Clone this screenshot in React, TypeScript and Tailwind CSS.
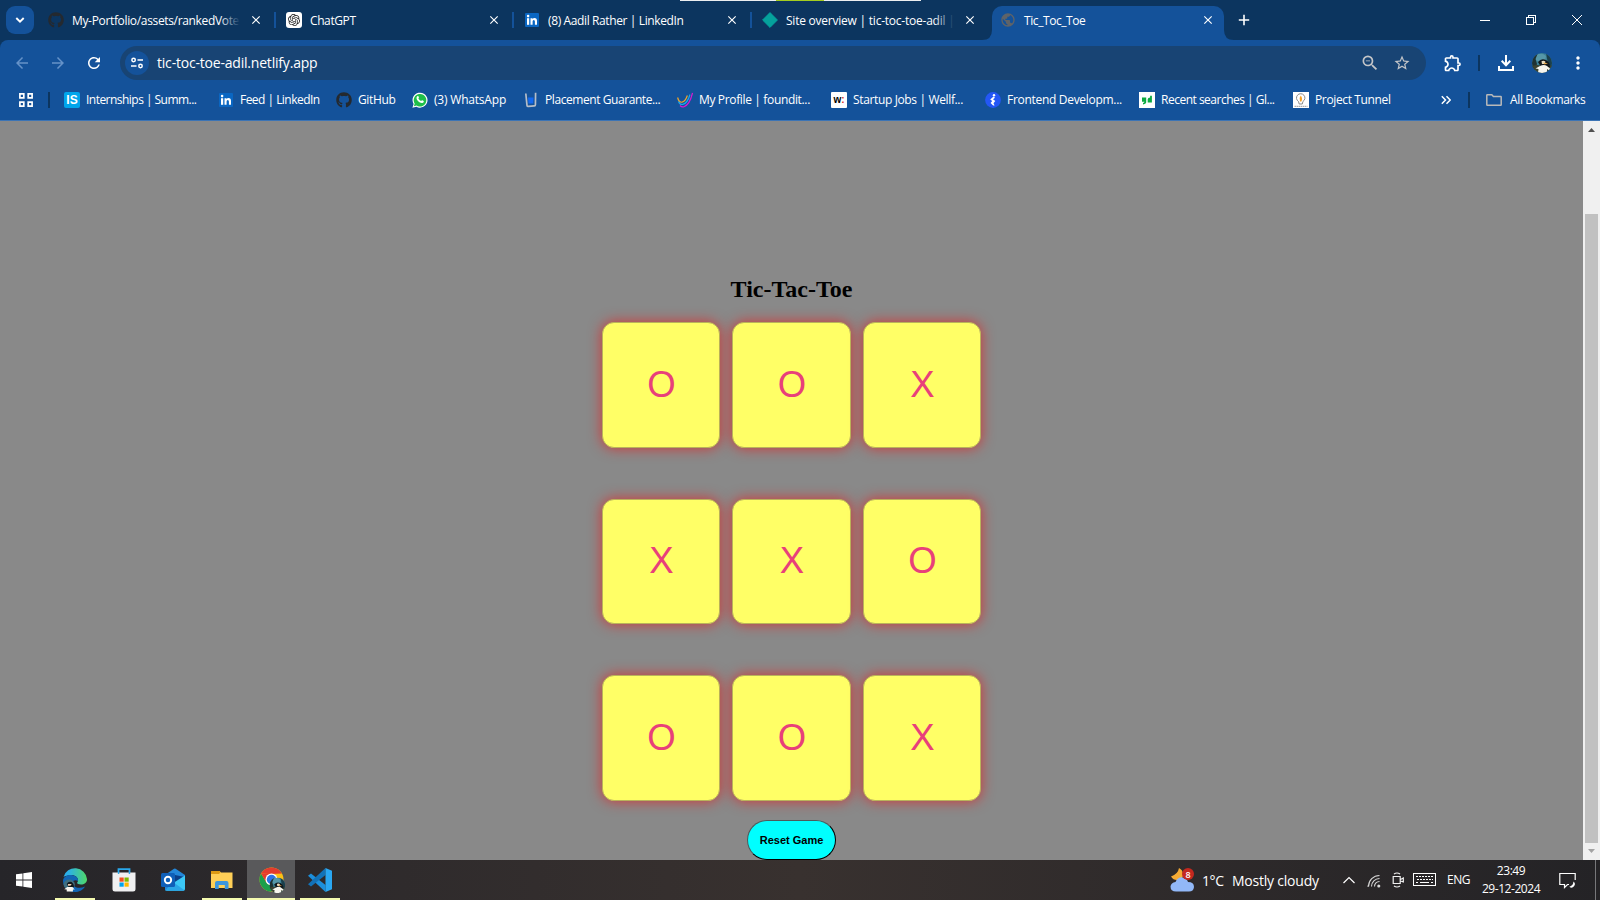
import type { ReactNode } from "react";
import { FaGithub } from "react-icons/fa";
import {
  MdArrowBack,
  MdArrowForward,
  MdClose,
  MdMoreVert,
  MdOutlineExtension,
  MdPublic,
  MdRefresh,
  MdStarBorder,
  MdZoomOut,
} from "react-icons/md";
import { SiOpenai } from "react-icons/si";

const LinkedIn = () => (
  <svg viewBox="0 0 14 14" className="size-3.5">
    <rect width="14" height="14" rx="1" fill="#0a66c2" />
    <rect x="2" y="5.200" width="2.200" height="6.600" fill="#fff" />
    <circle cx="3.100" cy="3.100" r="1.300" fill="#fff" />
    <path d="M5.500 5.200h2v.9q.7-1.100 2-1.100 2.500 0 2.500 3v3.800H9.900V8.500q0-1.600-1.100-1.600-1.200 0-1.200 1.600v3.300H5.500Z" fill="#fff" />
  </svg>
);

type Tab = { title: string; icon: ReactNode; tracking: string; divider?: boolean; fade?: boolean };

const tabs: Tab[] = [
  { title: "My-Portfolio/assets/rankedVote", icon: <FaGithub className="size-4 text-[#24292f]" />, tracking: "tracking-[-0.34px]", divider: true, fade: true },
  {
    title: "ChatGPT",
    icon: (
      <span className="flex size-4 items-center justify-center rounded-[3px] bg-white">
        <SiOpenai className="size-3 text-[#222]" />
      </span>
    ),
    tracking: "tracking-[-0.4px]",
    divider: true,
  },
  { title: "(8) Aadil Rather | LinkedIn", icon: <LinkedIn />, tracking: "tracking-[-0.38px]", divider: true },
  {
    title: "Site overview | tic-toc-toe-adil |",
    icon: (
      <svg viewBox="0 0 16 16" className="size-4">
        <path d="M8 .6 15.4 8 8 15.4.6 8Z" fill="#05a19c" stroke="#05a19c" strokeLinejoin="round" />
      </svg>
    ),
    tracking: "tracking-[-0.23px]",
    fade: true,
  },
];

const bookmarks: { title: string; icon: ReactNode; width: string; tracking: string }[] = [
  {
    title: "Internships | Summ...",
    width: "w-[154px]",
    tracking: "tracking-[-0.53px]",
    icon: (
      <span className="flex size-4 items-center justify-center rounded-[2px] bg-[#00a5ec] font-['Liberation_Sans',sans-serif] text-[12px] leading-none font-bold text-white">
        IS
      </span>
    ),
  },
  { title: "Feed | LinkedIn", width: "w-[118px]", tracking: "tracking-[-0.53px]", icon: <LinkedIn /> },
  { title: "GitHub", width: "w-[76px]", tracking: "tracking-[-0.35px]", icon: <FaGithub className="size-4 text-[#24292f]" /> },
  {
    title: "(3) WhatsApp",
    width: "w-[111px]",
    tracking: "tracking-[-0.2px]",
    icon: (
      <svg viewBox="0 0 16 16" className="size-4">
        <path d="M.4 15.7 1.6 12A7.5 7.5 0 1 1 4.4 14.7Z" fill="#fff" />
        <path d="M1.9 14.2 2.7 11.6A6.3 6.3 0 1 1 4.6 13.5Z" fill="#1fbf4a" />
        <path d="M5.3 4.2c.9-.6 1.3.2 1.6 1.2.1.5-.6.8-.5 1.1.6 1.2 1.500 1.900 2.700 2.400.4.1.7-.9 1.200-.7l1.400.7c.3.3 0 1.400-.8 1.800C8.500 11.800 4.500 8.500 4.500 6c0-.8.3-1.400.8-1.800Z" fill="#fff" />
      </svg>
    ),
  },
  {
    title: "Placement Guarante...",
    width: "w-[154px]",
    tracking: "tracking-[-0.43px]",
    icon: (
      <svg viewBox="0 0 16 16" className="size-4" fill="none">
        <path d="M5 5.500h5.500l-.3 6H5.500Z" fill="#1268f0" />
        <path d="M2.800 1.500 4 13.300q.1 1.200 1.400 1.100l6-.5q1-.1 1-1.200L12.600.8" stroke="#b5bdc8" strokeWidth="1.700" />
      </svg>
    ),
  },
  {
    title: "My Profile | foundit...",
    width: "w-[154px]",
    tracking: "tracking-[-0.35px]",
    icon: (
      <svg viewBox="0 0 16 16" className="size-4" fill="none" strokeWidth="1.200">
        <path d="M.6 5.500C1.500 9 3 10.500 5 10.200 8 9.600 9.500 6 10.400 3.500" stroke="#f0a52a" />
        <path d="M1.500 9.500c1 2.400 2.500 3.300 4.300 2.900C9.500 11.600 11.700 7 13 2.500" stroke="#19a8ee" />
        <path d="M3 13.500c1.200 1.300 2.500 1.700 4 1.200C11.500 13 14 7.500 15.500 1" stroke="#d51bd0" />
      </svg>
    ),
  },
  {
    title: "Startup Jobs | Wellf...",
    width: "w-[154px]",
    tracking: "tracking-[-0.36px]",
    icon: (
      <span className="flex size-4 items-center justify-center rounded-[1px] bg-white pb-px font-['Liberation_Sans',sans-serif] text-[10px] leading-none font-bold text-black">
        w<span className="text-[#e02b2b]">:</span>
      </span>
    ),
  },
  {
    title: "Frontend Developm...",
    width: "w-[154px]",
    tracking: "tracking-[-0.3px]",
    icon: (
      <svg viewBox="0 0 16 16" className="size-4">
        <circle cx="8" cy="8" r="7.900" fill="#2457f5" />
        <circle cx="9" cy="3.200" r="1.200" fill="#fff" />
        <path d="M8.500 4.500 5.200 7.500l2 1.600L5.600 11l2.500 2.600h1.500L8.500 11.200 10.300 9 8 7.300l2-1.600Z" fill="#fff" />
      </svg>
    ),
  },
  {
    title: "Recent searches | Gl...",
    width: "w-[154px]",
    tracking: "tracking-[-0.5px]",
    icon: (
      <svg viewBox="0 0 16 16" className="size-4">
        <rect width="16" height="16" fill="#fff" />
        <path d="M3 5.500h4.200v5Q7 12.300 4 12.400v-1.500q1.400-.1 1.500-1.200H3Z" fill="#0caa41" />
        <path d="M8.700 10.500V7.300q.2-1.800 2.400-1.900V3.700h1.800v6.800Z" fill="#0caa41" />
      </svg>
    ),
  },
  {
    title: "Project Tunnel",
    width: "w-[110px]",
    tracking: "tracking-[-0.36px]",
    icon: (
      <svg viewBox="0 0 16 16" className="size-4" fill="none">
        <rect width="16" height="16" fill="#fff" />
        <path d="M5.500 9.500a4.200 4.200 0 1 1 4.400 0L9.300 12H6.200Z" stroke="#8b8b8b" />
        <path d="M7.700 3.600Q10 6.500 8.400 9.500H7Q5.600 6.500 7.700 3.600Z" fill="#f6a127" />
        <path d="M1.500 14.300h13" stroke="#999" strokeDasharray="1.500 .5" />
      </svg>
    ),
  },
];

function TabStrip() {
  return (
    <div className="flex h-10 shrink-0 items-center bg-[#0c355f] pl-1.5">
      <button className="flex size-7 items-center justify-center rounded-[9px] bg-[#14529a]">
        <svg viewBox="0 0 10 10" className="size-2.5" fill="none" stroke="#fff" strokeWidth="1.900">
          <path d="m1.300 3 3.700 3.700L8.700 3" />
        </svg>
      </button>
      <div className="flex h-full pl-1">
        {tabs.map((t) => (
          <div key={t.title} className="flex h-full w-[238px] items-center pl-2.5">
            <span className="flex w-4 shrink-0 justify-center">{t.icon}</span>
            <span className={"relative ml-2 w-[168px] shrink-0 overflow-hidden pt-px text-[12px] whitespace-nowrap " + t.tracking}>
              {t.title}
              {t.fade && <span className="absolute inset-y-0 right-0 w-5 bg-gradient-to-r from-transparent to-[#0c355f]" />}
            </span>
            <span className="flex w-8 shrink-0 justify-center">
              <MdClose className="size-3.5" />
            </span>
            {t.divider && <span className="ml-0.5 h-4 w-0.5 shrink-0 bg-[#14529a]" />}
          </div>
        ))}
        <div className="relative ml-0.5 flex h-full w-[232px] pt-1.5">
          <svg viewBox="0 0 10 10" className="absolute bottom-0 -left-2.5 size-2.5">
            <path d="M10 0v10H0Q10 10 10 0Z" fill="#14529a" />
          </svg>
          <svg viewBox="0 0 10 10" className="absolute -right-2.5 bottom-0 size-2.5">
            <path d="M0 0v10h10Q0 10 0 0Z" fill="#14529a" />
          </svg>
          <div className="flex w-full items-center rounded-t-[10px] bg-[#14529a] pb-1.5 pl-2">
            <MdPublic className="size-4 text-[#5f6368]" />
            <span className="ml-2 w-[168px] pt-px text-[12px] tracking-[-0.42px] whitespace-nowrap">Tic_Toc_Toe</span>
            <span className="flex w-8 justify-center">
              <MdClose className="size-3.5" />
            </span>
          </div>
        </div>
      </div>
      <svg viewBox="0 0 12 12" className="ml-3.5 size-3" stroke="#fff" strokeWidth="1.600">
        <path d="M6 .8v10.400M.8 6h10.400" />
      </svg>
      <div className="ml-auto flex items-center gap-9 pr-[18px]">
        <svg viewBox="0 0 10 10" className="size-2.5" stroke="#fff" shapeRendering="crispEdges">
          <path d="M0 5.500h10" />
        </svg>
        <svg viewBox="0 0 10 10" className="size-2.5" stroke="#fff" fill="none" shapeRendering="crispEdges">
          <path d="M.5 2.500h7v7h-7zM2.500 2V.5h7v7H8" />
        </svg>
        <svg viewBox="0 0 10 10" className="size-2.5" stroke="#fff">
          <path d="m0 0 10 10M10 0 0 10" />
        </svg>
      </div>
    </div>
  );
}

function PenguinArt() {
  return (
    <>
      <rect width="20" height="20" fill="#3a7f93" />
      <path d="M4 2q6-3 10 1l-1 6-5 1-4-3Z" fill="#5597a8" />
      <path d="M0 0h6L3.500 6l1.500 5-3 9H0Z" fill="#1f3233" />
      <path d="M14 0h6v15l-3-3-1.500-4Z" fill="#1b3f4b" />
      <path d="M0 13q6-2 9 0t11-1v8H0Z" fill="#3a4230" />
      <path d="M6 9q3-4 8-2 4 2 4 7h-9Z" fill="#12181b" />
      <path d="M9.500 8.200q2.500-1 4 .6L12.500 11h-2.500Z" fill="#e8dcc0" />
      <path d="m11.500 9.500 4.500.8-3.500 1.200Z" fill="#e7a94c" />
      <path d="M8 13q4-2 7 0l4 3.500-2.500.5-1.500-1v4H6l.5-4-3-.5Z" fill="#f6f5ee" />
    </>
  );
}

function Avatar({ className }: { className: string }) {
  return (
    <svg viewBox="0 0 20 20" className={className}>
      <clipPath id="avatar">
        <circle cx="10" cy="10" r="10" />
      </clipPath>
      <g clipPath="url(#avatar)">
        <PenguinArt />
      </g>
    </svg>
  );
}

function Toolbar() {
  return (
    <div className="flex h-[46px] shrink-0 items-center">
      <MdArrowBack className="ml-[13px] size-[18px] shrink-0 text-[#6592c8]" />
      <MdArrowForward className="ml-[18px] size-[18px] shrink-0 text-[#6592c8]" />
      <MdRefresh className="ml-[18px] size-[18px] shrink-0" />
      <div className="ml-[17px] flex h-[34px] w-[1306px] shrink-0 items-center rounded-full bg-[#184474] pl-[5px]">
        <span className="flex size-6 items-center justify-center rounded-full bg-[#14529a]">
          <svg viewBox="0 0 14 14" className="size-3.5" fill="none" stroke="#fff" strokeWidth="1.500">
            <circle cx="3.600" cy="4" r="1.700" />
            <path d="M7.500 4H13M1 10h5.500" />
            <circle cx="10.500" cy="10" r="1.700" />
          </svg>
        </span>
        <span className="ml-2 pb-px text-[14px] tracking-[-0.2px]">tic-toc-toe-adil.netlify.app</span>
        <MdZoomOut className="ml-auto size-5 text-[#c3c5c8]" />
        <MdStarBorder className="mr-[15px] ml-[13px] size-[18px] text-[#c3c5c8]" />
      </div>
      <MdOutlineExtension className="ml-[17px] size-5 shrink-0" />
      <span className="ml-[15px] h-4 w-0.5 shrink-0 bg-[#0c355f]" />
      <svg viewBox="0 0 16 16" className="ml-[18px] size-4 shrink-0" fill="none" stroke="#fff" strokeWidth="2">
        <path d="M8 0v10M3.700 5.800 8 10.200l4.300-4.400M1 11v4h14v-4" />
      </svg>
      <Avatar className="ml-[18px] size-5 shrink-0" />
      <MdMoreVert className="ml-4 size-5 shrink-0" />
    </div>
  );
}

function BookmarksBar() {
  return (
    <div className="flex h-7 shrink-0 items-center text-[12px] whitespace-nowrap">
      <svg viewBox="0 0 14 14" className="ml-[19px] size-3.5" fill="none" stroke="#fff" strokeWidth="1.700">
        <path d="M.9.900h3.900v3.900H.9zM9.200.900h3.900v3.900H9.200zM.9 9.200h3.900v3.900H.9zM9.200 9.200h3.900v3.900H9.200z" />
      </svg>
      <span className="mr-3.5 ml-[15px] h-4 w-0.5 bg-[#0c355f]" />
      {bookmarks.map((b) => (
        <div key={b.title} className={"flex shrink-0 items-center gap-1.5 " + b.width}>
          <span className="flex w-4 shrink-0 justify-center">{b.icon}</span>
          <span className={b.tracking}>{b.title}</span>
        </div>
      ))}
      <svg viewBox="0 0 10 10" className="ml-[38px] size-2.5" fill="none" stroke="#fff" strokeWidth="1.500">
        <path d="m.8 1.200 3.700 3.800L.8 8.800M5.500 1.200 9.200 5 5.500 8.800" />
      </svg>
      <span className="ml-[17px] h-4 w-0.5 bg-[#0c355f]" />
      <svg viewBox="0 0 16 12" className="ml-4 h-3 w-4" fill="none" stroke="#b9b9b9" strokeWidth="1.500">
        <path d="M1.300.8h4.500l1.600 1.700h7.300q.5 0 .5.500v7.700q0 .5-.5.500H1.300q-.5 0-.5-.5V1.300q0-.5.500-.5Z" />
      </svg>
      <span className="ml-2 tracking-[-0.36px]">All Bookmarks</span>
    </div>
  );
}

const board = ["O", "O", "X", "X", "X", "O", "O", "O", "X"];

function Page() {
  return (
    <div className="flex h-[739px] shrink-0">
      <main className="flex w-[1583px] flex-col items-center bg-[#898989] pt-[154px]">
        <h1 className="font-['Liberation_Serif',serif] text-[24px] leading-7 font-bold text-black">Tic-Tac-Toe</h1>
        <div className="mt-[19px] grid grid-cols-[118px_119px_118px] grid-rows-[126px_125px_126px] gap-x-3 gap-y-[51px]">
          {board.map((mark, i) => (
            <button
              key={i}
              className="flex items-center justify-center rounded-[12px] border border-[#b9b35a] bg-[#ffff66] pl-px font-['Liberation_Sans',sans-serif] text-[36.500px] leading-none text-[#e8407a] shadow-[0_0_14px_rgba(255,0,0,0.62)]"
            >
              {mark}
            </button>
          ))}
        </div>
        <button className="mt-[19px] h-10 w-[89px] rounded-[20px] border border-t-[#4d5a5a] border-r-black border-b-black border-l-[#4d5a5a] bg-[#00ffff] font-['Liberation_Sans',sans-serif] text-[11px] font-bold whitespace-nowrap text-black">
          Reset Game
        </button>
      </main>
      <div className="flex w-[17px] flex-col items-center bg-[#f0f0f0]">
        <svg viewBox="0 0 17 17" className="size-[17px]">
          <path d="M5 11h7L8.500 7Z" fill="#505050" />
        </svg>
        <div className="mt-[76px] h-[629px] w-[13px] bg-[#c1c1c1]" />
        <svg viewBox="0 0 17 17" className="size-[17px]">
          <path d="M5 6h7L8.500 10Z" fill="#a3a3a3" />
        </svg>
      </div>
    </div>
  );
}

function TaskItem({ children, active, running }: { children: ReactNode; active?: boolean; running?: boolean }) {
  return (
    <div className={"flex h-10 w-12 flex-col items-center " + (active ? "bg-[#59595b]" : "")}>
      <div className="flex h-[38px] w-full items-center justify-center pt-0.5">{children}</div>
      {running && <span className={"h-0.5 bg-[#f5fbb0] " + (active ? "w-12" : "w-10")} />}
    </div>
  );
}

function Taskbar() {
  return (
    <div className="flex h-10 shrink-0 bg-gradient-to-r from-[#262529] via-[#38312f] to-[#242326] font-['Open_Sans','Noto_Sans',sans-serif] text-white">
      <div className="flex gap-px">
        <TaskItem>
          <svg viewBox="0 0 16 16" className="size-4" fill="#fff">
            <path d="M0 2.300 6.500 1.400v6.200H0ZM7.300 1.300 16 0v7.600H7.300ZM0 8.400h6.500v6.200L0 13.700ZM7.300 8.400H16V16l-8.700-1.200Z" />
          </svg>
        </TaskItem>
        <span className="w-px" />
        <TaskItem running>
          <svg viewBox="0 0 24 24" className="size-6">
            <defs>
              <linearGradient id="edge-top" x1="0" x2="1">
                <stop offset=".2" stopColor="#2bb0ea" />
                <stop offset="1" stopColor="#4fd968" />
              </linearGradient>
            </defs>
            <path d="M.5 9A12 12 0 0 1 24 11c.2 3.500-2.500 5.500-6 5.500-3.500 0-4.500-1.300-3.500-2.500C16.500 11 13 7 8.500 7 5 7 2 8 .5 9Z" fill="url(#edge-top)" />
            <path d="M0 13C0 9 4 6.500 8.500 7c4 .3 7 3 6.500 6-2-1.500-5-1-5.500 1.500C9 19 16 21.500 22 18.500 19.500 22.500 16 24 12 24 5 24 0 19 0 13Z" fill="#1166b5" />
            <g transform="translate(0 11) scale(.62)">
              <ellipse cx="10" cy="9" rx="9" ry="8" fill="#3f6f80" />
              <path d="M6 8q3-5 8-3 4 3 4 8h-9Z" fill="#12181b" />
              <path d="m8 8 6 0-2 3H8Z" fill="#e8cdb0" />
              <path d="M7 13h8l4 4-3 0v3H6v-3l-4-.5Z" fill="#f6f5ee" />
            </g>
          </svg>
        </TaskItem>
        <TaskItem>
          <svg viewBox="0 0 24 24" className="size-6">
            <path d="M6.500 6V1.200h11V6" fill="none" stroke="#29a9ed" strokeWidth="1.800" />
            <path d="M.5 4.500h5.400V6h1.300V4.500h9.600V6h1.300V4.500h5.400V21q0 2.500-2.500 2.500H3Q.5 23.500.5 21Z" fill="#f0f0f1" />
            <path d="M7.500 9.500h4.200v4.200H7.500z" fill="#f25022" />
            <path d="M12.500 9.500h4.200v4.200h-4.200z" fill="#7fba00" />
            <path d="M7.500 14.500h4.200v4.200H7.500z" fill="#00a4ef" />
            <path d="M12.500 14.500h4.200v4.200h-4.200z" fill="#ffb900" />
          </svg>
        </TaskItem>
        <TaskItem>
          <svg viewBox="0 0 24 24" className="size-6">
            <path d="M4 7 13 .7q.8-.5 1.600 0L24 7v13q0 2-2 2H4Z" fill="#2386d8" />
            <path d="m14 7 10 2-10 7Z" fill="#0b3f88" />
            <path d="m13 14.500 11-7V21q0 1.800-2 1.800H5Z" fill="#3cc8f6" />
            <path d="m12 14 11.500 8.200q-.6.600-1.500.6H4Z" fill="#2ba6e6" />
            <rect y="5" width="14" height="14" rx="1.500" fill="#0f5fb8" />
            <circle cx="7" cy="12" r="3.200" fill="none" stroke="#fff" strokeWidth="1.900" />
          </svg>
        </TaskItem>
        <TaskItem running>
          <svg viewBox="0 0 24 24" className="size-6">
            <path d="M1 3h8.500l1.500 1.500h11.500V20H1Z" fill="#ffcf57" />
            <path d="M1 3h8.500l1 1.200L9 6H1Z" fill="#dd9a14" />
            <path d="M5 21v-6q0-2 2-2h9.500q2 0 2 2v6h-3.700v-4H8.700v4Z" fill="#3d96de" />
          </svg>
        </TaskItem>
        <TaskItem active running>
          <svg viewBox="0 0 26 26" className="ml-0.5 size-[26px]">
            <circle cx="12.500" cy="12.500" r="12" fill="#fbc116" />
            <path d="M2.100 6.500A12 12 0 0 1 22.900 6.500L12.500 7Z" fill="#e33b2e" />
            <path d="M2.100 6.500A12 12 0 0 0 12.500 24.500L17.500 15.500 7.500 15.500Z" fill="#1a9f4b" />
            <path d="M2.100 6.500 7.300 15.500 12.500 6.500Z" fill="#e33b2e" />
            <circle cx="12.500" cy="12.500" r="6" fill="#fff" />
            <circle cx="12.500" cy="12.500" r="4.700" fill="#2d74e7" />
            <g transform="translate(10.500 10.500) scale(.78)" clipPath="url(#avatar)">
              <PenguinArt />
            </g>
          </svg>
        </TaskItem>
        <TaskItem running>
          <svg viewBox="0 0 24 24" className="size-6">
            <path d="M17.500 17 3 5.500 0 7.700 17.500 24Z" fill="#1c8fdc" />
            <path d="M17.500 0v7L3 18.500 0 16.300Z" fill="#1272b8" />
            <path d="M17.500 0 24 2.800v18.400L17.500 24Z" fill="#2aa7f2" />
          </svg>
        </TaskItem>
      </div>
      <div className="ml-auto flex items-center">
        <div className="relative">
          <svg viewBox="0 0 26 24" className="h-6 w-[26px]">
            <path d="M9 0q-1 6-8 8.500 3 5 9 3 5-3 2-9Q11 1 9 0Z" fill="#f5ab35" />
            <path d="M6 23.500Q.500 23.500.500 18.500q.500-4 5-4.500Q8 8.500 13 9.500q4 1 5 4.500 6 0 6 5-.500 4.500-5 4.500Z" fill="#92b8f7" />
          </svg>
          <span className="absolute top-0 right-0.5 flex size-3 items-center justify-center rounded-full bg-[#c4281f] text-[9px] leading-none font-semibold">8</span>
        </div>
        <span className="ml-1.5 w-[30px] text-[14px] tracking-[-0.4px]">1°C</span>
        <span className="w-[111px] text-[14px] tracking-[-0.22px] whitespace-nowrap">Mostly cloudy</span>
        <svg viewBox="0 0 12 8" className="h-2 w-3" fill="none" stroke="#fff" strokeWidth="1.200">
          <path d="m.5 7 5.500-5.500L11.500 7" />
        </svg>
        <svg viewBox="0 0 14 14" className="mt-0.5 ml-3 size-3.5" fill="none" stroke="#d8d8d8" strokeWidth="1.100">
          <path d="M1.500 12.500A11 11 0 0 1 12.500 1.500M4.500 12.500a8 8 0 0 1 8-8M7.500 12.500a5 5 0 0 1 5-5" />
          <path d="M.8 12.800 1.500 11" />
          <circle cx="11.800" cy="12" r="1" fill="#fff" />
        </svg>
        <svg viewBox="0 0 12 16" className="ml-[11px] h-4 w-3" fill="none" stroke="#f0f0f0" strokeWidth="1.200">
          <path d="M1.200 4.500h7v7h-7zM8.500 7.500 11.300 6v4L8.500 9M2 2q3-2 6 0M2 14q3 2 6 0" />
        </svg>
        <svg viewBox="0 0 23 14" className="ml-[9px] h-3.5 w-[23px]" fill="none" stroke="#fff" shapeRendering="crispEdges">
          <path d="M.5.500h22v12H.5z" />
          <path d="M3 3.500h17M4 6.500h16" strokeDasharray="2 1" />
          <path d="M3 9.500h2M7 9.500h9M18 9.500h2" />
        </svg>
        <span className="ml-[11px] w-[24px] pb-px text-[12px] tracking-[-0.5px]">ENG</span>
        <div className="ml-[9px] flex w-[62px] flex-col items-center text-[12px] leading-[18px] tracking-[-0.45px] whitespace-nowrap">
          <span>23:49</span>
          <span>29-12-2024</span>
        </div>
        <svg viewBox="0 0 17 17" className="ml-[17px] size-[17px]" fill="none" stroke="#fff" strokeWidth="1.200">
          <path d="M10 12.500H8.500L5.500 15.500v-3H.8V1.500h15.400V8" />
          <path d="M14.500 9.500a3.300 3.300 0 1 1-4.200 5.200q3.700-.7 4.200-5.200Z" fill="#fff" stroke="none" />
        </svg>
        <span className="ml-[19px] h-10 w-px bg-[#77777a]" />
        <span className="w-[4px]" />
      </div>
    </div>
  );
}

export default function App() {
  return (
    <div className="relative flex h-[900px] w-[1600px] flex-col overflow-hidden bg-[#0c355f] font-['Open_Sans','Noto_Sans',sans-serif] text-white">
      <TabStrip />
      <div className="flex h-[81px] shrink-0 flex-col rounded-t-[8px] border-b border-[#3c74b5] bg-[#14529a]">
        <Toolbar />
        <BookmarksBar />
      </div>
      <Page />
      <Taskbar />
      <div className="absolute top-0 left-[680px] flex h-px w-[241px] bg-[#eceef0]">
        <span className="ml-24 w-12 bg-[#a5cd1f]" />
      </div>
    </div>
  );
}
